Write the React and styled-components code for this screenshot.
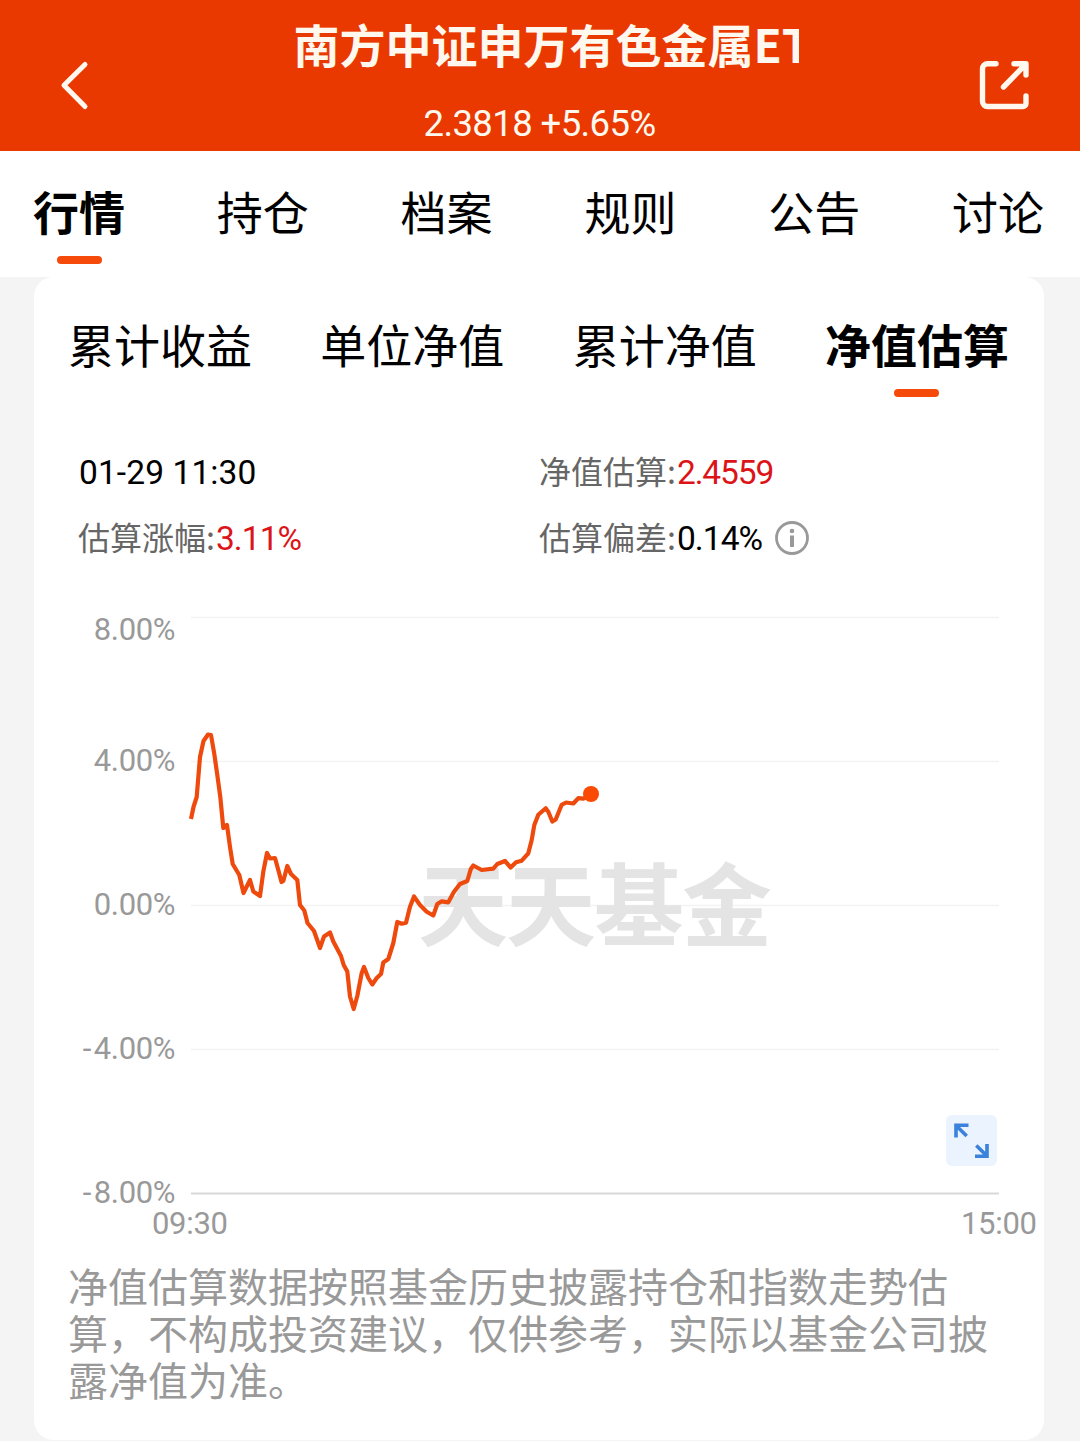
import styled, { createGlobalStyle } from "styled-components";

const GlobalStyle = createGlobalStyle`
  * {
    box-sizing: border-box;
  }
  body {
    margin: 0;
    background-color: #f4f4f4;
    color: #000;
    font-family: "Noto Sans CJK SC", sans-serif;
  }
`;

const Page = styled.div`
  width: 1080px;
  height: 1441px;
  overflow: hidden;
`;

const StyledHeader = styled.header`
  display: flex;
  justify-content: space-between;
  height: 151px;
  padding: 58px 49px 0 57px;
  background-color: #e93800;
  color: #fff8ee;
`;

const IconButton = styled.button`
  width: 54px;
  height: 54px;
  padding: 0;
  border: 0;
  background: none;
  color: inherit;
  svg {
    display: block;
  }
`;

const Heading = styled.div`
  width: 505px;
  margin-top: -58px;
  margin-left: 4px;
`;

const Title = styled.h1`
  height: 72px;
  margin: 0;
  padding-top: 9px;
  overflow: hidden;
  font-size: 46px;
  font-weight: 700;
  line-height: 68px;
  white-space: nowrap;
`;

const Price = styled.p`
  margin: 30px 0 0 130px;
  font-family: Roboto, sans-serif;
  font-size: 36.5px;
  line-height: 44px;
  letter-spacing: -0.6px;
  white-space: nowrap;
`;

const Tabs = styled.nav`
  display: flex;
  justify-content: space-between;
  height: ${(props) => props.$height}px;
  padding: ${(props) => props.$padding};
  background-color: #fff;
`;

const Tab = styled.a`
  display: flex;
  flex-direction: column;
  align-items: center;
  font-size: 46px;
  font-weight: ${(props) => (props.$active ? 700 : 400)};
  line-height: 60px;
  white-space: nowrap;
  &::after {
    content: "";
    width: 45px;
    height: 8px;
    margin-top: 16px;
    border-radius: 4px;
    background-color: ${(props) => (props.$active ? "#f64a0a" : "transparent")};
  }
`;

const Card = styled.main`
  width: 1010px;
  height: 1163px;
  margin-left: 34px;
  border-radius: 20px;
  background-color: #fff;
  overflow: hidden;
`;

const Summary = styled.div`
  display: grid;
  grid-template-columns: 461px 1fr;
  grid-auto-rows: 66px;
  padding: 32px 0 0 44px;
`;

const Field = styled.div`
  display: flex;
  align-items: center;
  font-size: 32px;
  color: #666;
`;

const Label = styled.span`
  margin-top: -4px;
`;

const Value = styled.span`
  margin-left: 1px;
  font-family: Roboto, sans-serif;
  font-size: 33.5px;
  letter-spacing: ${(props) => props.$spacing || 0}px;
  color: ${(props) => (props.$up ? "#dc1418" : "#000")};
`;

const InfoIcon = styled.svg`
  margin-left: 13px;
`;

const ChartBox = styled.div`
  position: relative;
  height: 660px;
  margin-top: 14px;
`;

const StyledChart = styled.svg`
  display: block;
  font-family: Roboto, sans-serif;
`;

const Expand = styled.button`
  position: absolute;
  top: 530px;
  left: 912px;
  width: 51px;
  height: 51px;
  padding: 0;
  border: 0;
  border-radius: 6px;
  background-color: #eaf3fe;
  svg {
    display: block;
  }
`;

const Note = styled.p`
  width: 930px;
  margin: 17px 0 0 34px;
  font-size: 40px;
  line-height: 47px;
  color: #999;
`;

const mainTabs = ["行情", "持仓", "档案", "规则", "公告", "讨论"];
const chartTabs = ["累计收益", "单位净值", "累计净值", "净值估算"];

const gridLines = [
  { label: "8.00%", y: 617.5, textY: 640 },
  { label: "4.00%", y: 761.5, textY: 771 },
  { label: "0.00%", y: 905.5, textY: 915 },
  { label: "-4.00%", y: 1049.5, textY: 1059 },
  { label: "-8.00%", y: 1193.5, textY: 1203 },
];

const points = [
  [191, 819], [193.5, 807], [196.7, 797], [200, 757], [203.5, 741],
  [208, 734.5], [211, 735], [214.3, 754], [217.3, 775], [220.3, 797],
  [223.3, 828], [227, 825], [230, 847], [232.7, 864], [239.3, 875],
  [243.5, 893], [250, 880], [253.3, 891.5], [260, 896], [263.3, 871.7],
  [267, 853], [270, 858.5], [275, 858], [278.3, 870], [281.5, 882],
  [283.3, 881], [287.3, 866], [291, 874], [297.3, 880], [300, 905],
  [304.3, 910.5], [307.5, 923], [314, 931], [320, 948], [324, 936.5],
  [330, 932.5], [333.3, 941.5], [341, 956], [343.7, 965], [347.3, 971.5],
  [350, 996.5], [353.7, 1009], [357.3, 996], [361.7, 973], [364, 967],
  [368.3, 978], [372.3, 984.5], [376.7, 978], [381, 974], [383.3, 962.5],
  [388.3, 959], [393.3, 943], [397.3, 922], [401.7, 923.7], [406, 922.7],
  [410, 906.7], [414, 896.5], [420, 905], [426.7, 911.7], [433.3, 915.5],
  [437.3, 904], [441.7, 901.3], [448.3, 902.3], [454, 891.7], [460, 884],
  [467.3, 881], [470.7, 869.3], [473.3, 865.5], [481.7, 870], [493.3, 868.7],
  [497.3, 864], [505, 861], [510.7, 867.5], [516, 862.3], [521.7, 860.7],
  [528.3, 853.3], [531.7, 840], [534.3, 825], [538.3, 814.8], [545.7, 808.2],
  [548.3, 811.7], [552.3, 821.5], [555.7, 819.5], [561.7, 804.8], [566, 802.5],
  [573.3, 803.5], [578.3, 798.2], [583.3, 798.7], [591, 794],
];

function Header() {
  return (
    <StyledHeader>
      <IconButton aria-label="back">
        <svg width="54" height="54" fill="none" stroke="currentColor" strokeWidth="5" strokeLinecap="round" strokeLinejoin="round">
          <path d="M28 6.5 7 27.2 28 48.5" />
        </svg>
      </IconButton>
      <Heading>
        <Title>南方中证申万有色金属ET</Title>
        <Price>2.3818 +5.65%</Price>
      </Heading>
      <IconButton aria-label="share">
        <svg width="54" height="54" fill="none" stroke="currentColor" strokeWidth="5.4" strokeLinecap="round" strokeLinejoin="round">
          <path d="M19 5.7H10.5a5 5 0 0 0-5 5V43.5a5 5 0 0 0 5 5H46a3 3 0 0 0 3-3V38M26.5 29 47 8M37 5.7H49V17" />
        </svg>
      </IconButton>
    </StyledHeader>
  );
}

function Chart() {
  const last = points[points.length - 1];
  return (
    <ChartBox>
      <StyledChart width="1010" height="660" viewBox="34 585 1010 660">
        {gridLines.map(({ label, y, textY }, i) => (
          <g key={label}>
            <line x1="191" x2="999" y1={y} y2={y} stroke={i === 4 ? "#d9d9d9" : "#f3f3f3"} strokeWidth={i === 4 ? 2 : 1.5} />
            <text x="175" y={textY} dx={label[0] === "-" ? "0 3" : "0"} textAnchor="end" letterSpacing="-0.4" fontSize="31" fill="#999">
              {label}
            </text>
          </g>
        ))}
        <text x="418" y="939" textLength="354" fontSize="90" fontWeight="700" fontFamily="Noto Sans CJK SC, sans-serif" fill="#e5e4e4">
          天天基金
        </text>
        <text x="152" y="1234" textLength="76" fontSize="31" fill="#999">
          09:30
        </text>
        <text x="961" y="1234" textLength="76" fontSize="31" fill="#999">
          15:00
        </text>
        <polyline points={points.join(" ")} fill="none" stroke="#ee4a0e" strokeWidth="4.2" strokeLinejoin="round" />
        <circle cx={last[0]} cy={last[1]} r="8" fill="#fb4a04" />
      </StyledChart>
      <Expand aria-label="expand">
        <svg width="51" height="51" fill="none" stroke="#3a82dc" strokeWidth="3.6">
          <path d="M22.5 10.3H10V22.5M10 10.5 20.7 21M29 41.2H41V29M41 41 30.3 30.5" />
        </svg>
      </Expand>
    </ChartBox>
  );
}

export default function App() {
  return (
    <Page>
      <GlobalStyle />
      <Header />
      <Tabs $height={126} $padding="29px 36px 0 33px">
        {mainTabs.map((name, i) => (
          <Tab key={name} $active={i === 0}>
            {name}
          </Tab>
        ))}
      </Tabs>
      <Card>
        <Tabs $height={130} $padding="36px 35px 0 34px">
          {chartTabs.map((name, i) => (
            <Tab key={name} $active={i === 3}>
              {name}
            </Tab>
          ))}
        </Tabs>
        <Summary>
          <Field>
            <Value $spacing={0.1}>01-29 11:30</Value>
          </Field>
          <Field>
            <Label>净值估算:</Label>
            <Value $up $spacing={-1.1}>2.4559</Value>
          </Field>
          <Field>
            <Label>估算涨幅:</Label>
            <Value $up $spacing={-0.9}>3.11%</Value>
          </Field>
          <Field>
            <Label>估算偏差:</Label>
            <Value $spacing={-0.9}>0.14%</Value>
            <InfoIcon width="34" height="34" fill="none" stroke="#999">
              <circle cx="17" cy="17" r="15.5" strokeWidth="2.8" />
              <path d="M17 14.5V26" strokeWidth="4" />
              <circle cx="17" cy="10" r="2.3" fill="#999" stroke="none" />
            </InfoIcon>
          </Field>
        </Summary>
        <Chart />
        <Note>净值估算数据按照基金历史披露持仓和指数走势估算，不构成投资建议，仅供参考，实际以基金公司披露净值为准。</Note>
      </Card>
    </Page>
  );
}
